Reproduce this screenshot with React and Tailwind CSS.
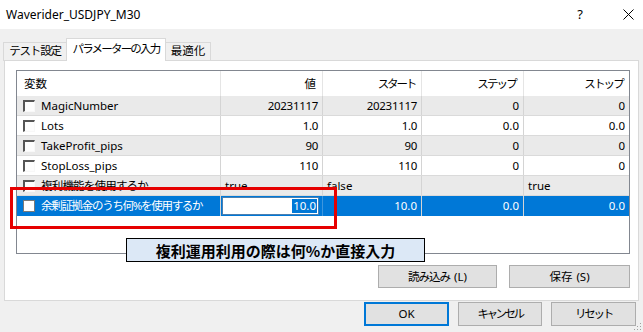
import React from "react";

const FONT = { fontFamily: '"Noto Sans", "Noto Sans CJK JP", sans-serif' };

function J({ children, t = "-1px", s = "11.5px" }) {
  return (
    <span className="whitespace-nowrap leading-none" style={{ letterSpacing: t, fontSize: s }}>
      {children}
    </span>
  );
}

function Check({ selected }) {
  if (selected) {
    return <div className="w-[12px] h-[12px] bg-white border border-[#7a7a7a] shrink-0" />;
  }
  return (
    <div className="w-[12px] h-[12px] shrink-0 border-t-2 border-l-2 border-b border-r border-t-[#555] border-l-[#555] border-b-[#f8f8f8] border-r-[#f8f8f8] bg-[#fdfdfd]" />
  );
}

const rows = [
  { name: "MagicNumber", v: "20231117", s: "20231117", st: "0", sp: "0", gray: true },
  { name: "Lots", v: "1.0", s: "1.0", st: "0.0", sp: "0.0", gray: false },
  { name: "TakeProfit_pips", v: "90", s: "90", st: "0", sp: "0", gray: true },
  { name: "StopLoss_pips", v: "110", s: "110", st: "0", sp: "0", gray: false },
];

function Cell({ children, right, last, className = "" }) {
  return (
    <div
      className={
        "h-full flex items-center whitespace-nowrap overflow-hidden px-[4px] " +
        (right ? "justify-end " : "justify-start ") +
        (last ? "" : "border-r border-[#d4d4d4] ") +
        className
      }
    >
      {children}
    </div>
  );
}

const GRID = "grid grid-cols-[204px_102px_99px_102px_105px]";

export default function App() {
  return (
    <div className="w-[643px] h-[332px] bg-[#f0f0f0] relative overflow-hidden text-[11.5px] text-black" style={FONT}>
      {/* title bar */}
      <div className="h-[29px] bg-white flex items-center pl-[6px] pr-[8px]">
        <span className="text-[12px] leading-none">Waverider_USDJPY_M30</span>
        <div className="flex-1" />
        <span className="text-[13px] leading-none mr-[40px]">?</span>
        <svg width="11" height="11" viewBox="0 0 11 11" className="mr-[1px]">
          <path d="M0.5 0.5 L10.5 10.5 M10.5 0.5 L0.5 10.5" stroke="#000" strokeWidth="1" />
        </svg>
      </div>

      {/* tabs */}
      <div className="h-[32px] flex items-end pl-[3px]">
        <div className="h-[19px] w-[63px] border border-[#d9d9d9] border-r-0 bg-[#f0f0f0] flex items-center justify-center pb-[1px]">
          <J t="-1.2px">テスト設定</J>
        </div>
        <div className="relative z-10 h-[23px] w-[100px] border border-b-0 border-[#d9d9d9] bg-white flex items-center justify-center pb-[3px]">
          <J t="-1.8px">パラメーターの入力</J>
        </div>
        <div className="h-[19px] w-[45px] border border-[#d9d9d9] border-l-0 bg-[#f0f0f0] flex items-center justify-center pb-[1px]">
          <J t="0px">最適化</J>
        </div>
      </div>

      {/* panel */}
      <div className="-mt-px ml-[4px] w-[635px] h-[241px] border border-[#d9d9d9] bg-white pl-[11px] pt-[9px] pr-[8px] flex flex-col">
        {/* list view */}
        <div className="w-[614px] h-[184px] border border-[#828790] bg-white flex flex-col">
          <div className={GRID + " h-[25px]"}>
            <Cell className="pl-[7px] border-[#e5e5e5]"><J t="0px">変数</J></Cell>
            <Cell right className="border-[#e5e5e5] pr-[6px]"><J t="0px">値</J></Cell>
            <Cell right className="border-[#e5e5e5] pr-[6px]"><J t="-2.2px">スタート</J></Cell>
            <Cell right className="border-[#e5e5e5] pr-[7px]"><J t="-1.8px">ステップ</J></Cell>
            <Cell right last className="pr-[6px]"><J t="-1.8px">ストップ</J></Cell>
          </div>
          {rows.map((r) => (
            <div
              key={r.name}
              className={GRID + " h-[20px] border-b border-[#dadada] " + (r.gray ? "bg-[#eaeaea]" : "bg-white")}
            >
              <Cell className="pl-[6px] gap-[6px]">
                <Check />
                <span>{r.name}</span>
              </Cell>
              <Cell right><span className="tracking-[-0.3px]">{r.v}</span></Cell>
              <Cell right><span className="tracking-[-0.3px]">{r.s}</span></Cell>
              <Cell right>{r.st}</Cell>
              <Cell right last>{r.sp}</Cell>
            </div>
          ))}
          <div className={GRID + " h-[20px] border-b border-[#dadada] bg-[#eaeaea]"}>
            <Cell className="pl-[6px] gap-[6px]">
              <Check />
              <J t="-0.8px">複利機能を使用するか</J>
            </Cell>
            <Cell>true</Cell>
            <Cell>false</Cell>
            <Cell></Cell>
            <Cell last>true</Cell>
          </div>
          <div className={GRID + " h-[20px] bg-[#0078d7] text-white"}>
            <Cell className="pl-[6px] gap-[6px] border-[#3d96de]">
              <Check selected />
              <J t="-1.3px">余剰証拠金のうち何%を使用するか</J>
            </Cell>
            <div className="h-full flex items-center pl-[1px] pr-[3px] border-r border-[#3d96de]">
              <div className="w-full h-[18px] bg-white border border-[#4a7fb0] flex items-center justify-end pr-[1px]">
                <span className="bg-[#0078d7] text-white leading-[14px] px-[1px]">10.0</span>
              </div>
            </div>
            <Cell right className="border-[#3d96de]">10.0</Cell>
            <Cell right className="border-[#3d96de]">0.0</Cell>
            <Cell right last>0.0</Cell>
          </div>
        </div>

        {/* load / save */}
        <div className="mt-[11px] flex justify-end gap-[12px] w-[614px]">
          <button className="w-[119px] h-[23px] bg-[#e1e1e1] border border-[#adadad] flex items-center justify-center gap-[4px]">
            <J t="-1px">読み込み</J>
            <span className="leading-none">(L)</span>
          </button>
          <button className="w-[121px] h-[23px] bg-[#e1e1e1] border border-[#adadad] flex items-center justify-center gap-[4px]">
            <J t="0px">保存</J>
            <span className="leading-none">(S)</span>
          </button>
        </div>
      </div>

      {/* bottom buttons */}
      <div className="mt-[1px] flex justify-end gap-[9px] pr-[7px]">
        <button className="w-[85px] h-[24px] bg-[#e1e1e1] border-2 border-[#0078d7] flex items-center justify-center leading-none">
          OK
        </button>
        <button className="w-[84px] h-[24px] bg-[#e1e1e1] border border-[#adadad] flex items-center justify-center">
          <J t="-2.5px">キャンセル</J>
        </button>
        <button className="w-[85px] h-[24px] bg-[#e1e1e1] border border-[#adadad] flex items-center justify-center">
          <J t="-2.3px">リセット</J>
        </button>
      </div>

      {/* resize grip */}
      <svg width="10" height="10" viewBox="0 0 10 10" className="absolute right-[1px] bottom-[1px]">
        <rect x="8" y="2" width="1" height="1" fill="#a0a0a0" />
        <rect x="5" y="5" width="1" height="1" fill="#a0a0a0" />
        <rect x="8" y="5" width="1" height="1" fill="#a0a0a0" />
        <rect x="2" y="8" width="1" height="1" fill="#a0a0a0" />
        <rect x="5" y="8" width="1" height="1" fill="#a0a0a0" />
        <rect x="8" y="8" width="1" height="1" fill="#a0a0a0" />
      </svg>

      {/* red highlight box */}
      <div className="absolute left-[10px] top-[187px] w-[327px] h-[42px] border-[3px] border-[#e60000]" />

      {/* annotation label */}
      <div
        className="absolute left-[126px] top-[238px] w-[299px] h-[24px] bg-[#dce8f6] border border-black flex items-center justify-center text-[15px] font-bold leading-none"
        style={{ fontFamily: '"Noto Sans CJK JP", sans-serif' }}
      >
        複利運用利用の際は何%か直接入力
      </div>
    </div>
  );
}
